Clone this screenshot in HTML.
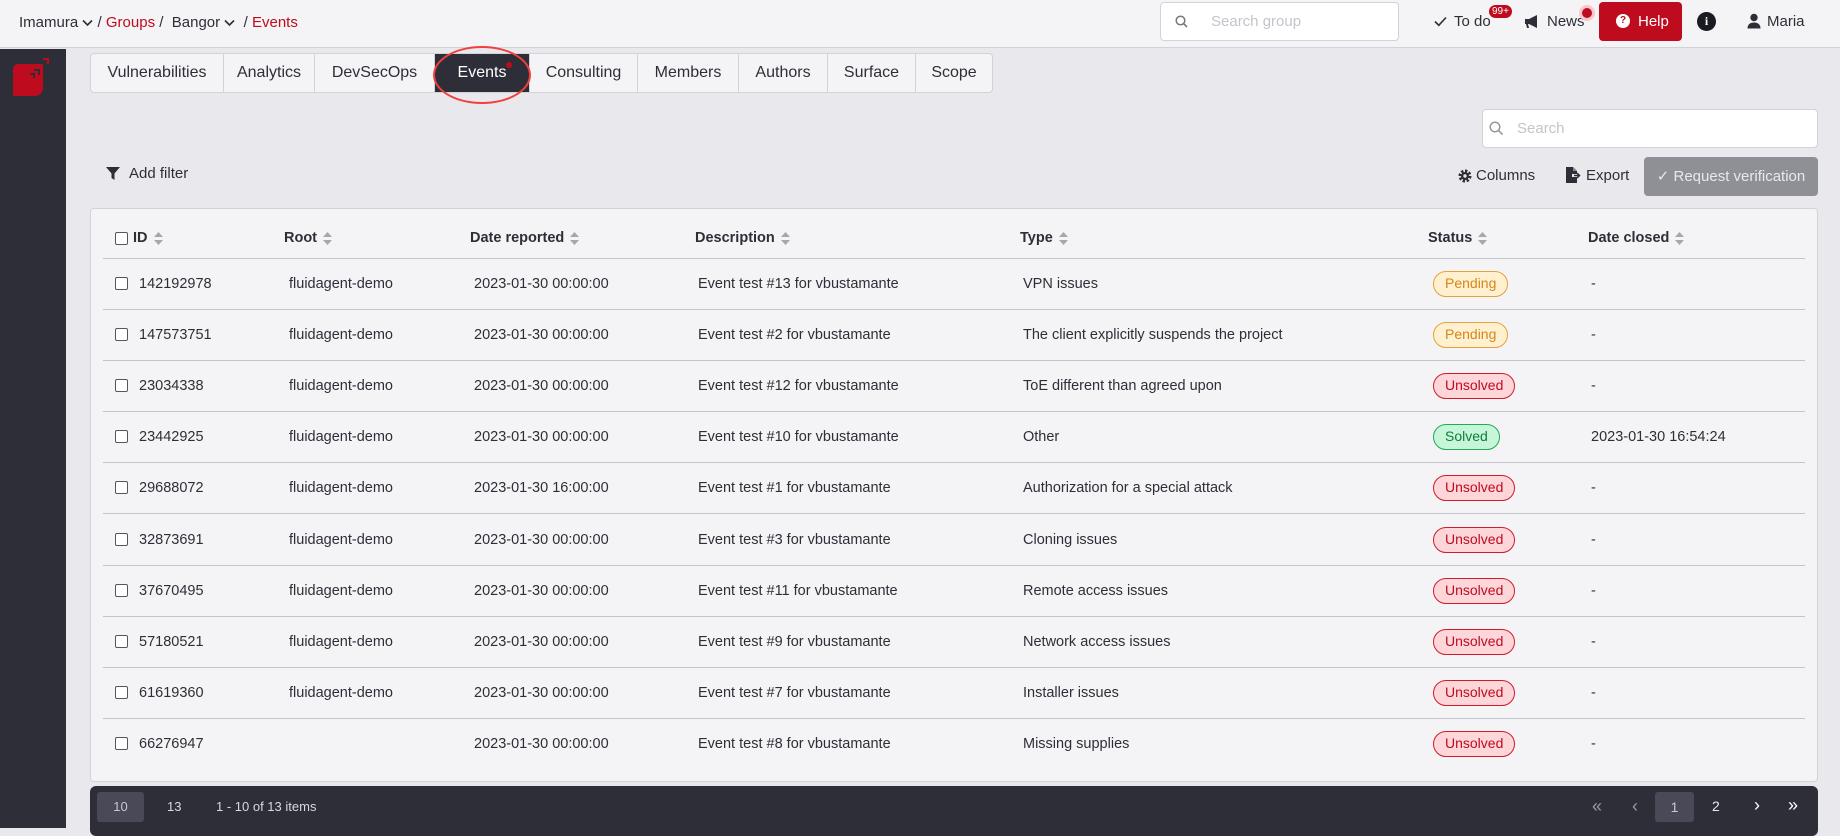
<!DOCTYPE html>
<html><head><meta charset="utf-8">
<style>
*{box-sizing:border-box;margin:0;padding:0}
body{width:1840px;height:828px;overflow:hidden;background:#e9e9ed;font-family:"Liberation Sans",Arial,sans-serif;color:#2e2e38;position:relative}
.a{position:absolute;white-space:nowrap}
.top{position:absolute;left:0;top:0;width:1840px;height:48px;background:#f4f4f6;border-bottom:1px solid #d2d2da}
.side{position:absolute;left:0;top:49px;width:66px;height:779px;background:#2e2e38}
.tabs{position:absolute;left:90px;top:53px;height:40px;display:flex;background:#f4f4f6;border:1px solid #d2d2da;border-radius:4px}
.tab{height:38px;line-height:38px;font-size:16px;color:#2e2e38;border-right:1px solid #d2d2da;text-align:center}
.tab.act{background:#2e2e38;color:#fff;position:relative}
.card{position:absolute;left:90px;top:208px;width:1728px;height:574px;background:#f4f4f6;border:1px solid #d2d2da;border-radius:4px}
.th{position:absolute;top:230px;font-size:14.5px;font-weight:bold;color:#2e2e38}
.cell{position:absolute;font-size:14.5px;color:#2e2e38}
.line{position:absolute;left:103px;width:1702px;height:1px;background:#c4c4cc}
.cb{position:absolute;width:13px;height:13px;border:1.5px solid #55555f;border-radius:2px;background:#fff}
.bd{position:absolute;height:26px;line-height:23px;border-radius:13px;font-size:14px;padding:0 11px;border:1.5px solid}
.pend{background:#fff0cf;border-color:#e5a23a;color:#d6861b}
.uns{background:#fdd6da;border-color:#d21a2a;color:#bf0b1e}
.sol{background:#c6f6d8;border-color:#24a855;color:#137a3b}
.sort{display:inline-block;vertical-align:middle;margin-left:6px}
</style></head><body>
<div class="top"></div>
<div class="a" style="left:19px;top:14px;font-size:15px">Imamura <svg width="11" height="8" viewBox="0 0 11 8"><path d="M1 1.5l4.5 4.5 4.5-4.5" fill="none" stroke="#2e2e38" stroke-width="1.6"/></svg> / <span style="color:#bf0b1e">Groups</span> / &nbsp;Bangor <svg width="11" height="8" viewBox="0 0 11 8"><path d="M1 1.5l4.5 4.5 4.5-4.5" fill="none" stroke="#2e2e38" stroke-width="1.6"/></svg> &nbsp;/ <span style="color:#bf0b1e">Events</span></div>
<div class="a" style="left:1160px;top:2px;width:239px;height:39px;background:#fff;border:1px solid #d2d2da;border-radius:4px"></div>
<svg class="a" style="left:1175px;top:15px" width="13" height="13" viewBox="0 0 13 13"><circle cx="5.5" cy="5.5" r="4.3" fill="none" stroke="#777" stroke-width="1.5"/><path d="M8.7 8.7l3.3 3.3" stroke="#777" stroke-width="1.6"/></svg>
<div class="a" style="left:1211px;top:13px;font-size:15px;color:#c4c4cc">Search group</div>
<svg class="a" style="left:1434px;top:16px" width="13" height="11" viewBox="0 0 13 11"><path d="M1 5.5l3.8 3.8L12 1.5" fill="none" stroke="#2e2e38" stroke-width="1.6"/></svg>
<div class="a" style="left:1454px;top:13px;font-size:15px">To do</div>
<div class="a" style="left:1489px;top:5px;height:13px;line-height:13px;padding:0 3px;background:#bf0b1e;color:#fff;border-radius:7px;font-size:10px">99+</div>
<svg class="a" style="left:1524px;top:14px" width="16" height="15" viewBox="0 0 16 15"><path d="M1 5h4l8-4v13l-8-4H4l1 4H3L2 10H1z" fill="#2e2e38"/></svg>
<div class="a" style="left:1547px;top:13px;font-size:15px">News</div>
<div class="a" style="left:1582px;top:8px;width:10px;height:10px;border-radius:50%;background:#bf0b1e;box-shadow:0 0 0 3px #f6c8cc"></div>
<div class="a" style="left:1599px;top:2px;width:83px;height:39px;background:#bf0b1e;border-radius:4px"></div>
<div class="a" style="left:1616px;top:14px;width:14px;height:14px;border-radius:50%;background:#fff;color:#bf0b1e;font-size:10px;font-weight:bold;text-align:center;line-height:14px">?</div>
<div class="a" style="left:1638px;top:13px;font-size:15px;color:#fff">Help</div>
<div class="a" style="left:1697px;top:12px;width:19px;height:19px;border-radius:50%;background:#1a1a22;color:#fff;font-size:12px;font-weight:bold;text-align:center;line-height:19px;font-family:'Liberation Serif',serif">i</div>
<svg class="a" style="left:1747px;top:13px" width="14" height="16" viewBox="0 0 14 16"><circle cx="7" cy="4.5" r="3.7" fill="#2e2e38"/><path d="M0.5 15.5c0-4 2.5-6 6.5-6s6.5 2 6.5 6z" fill="#2e2e38"/></svg>
<div class="a" style="left:1767px;top:13px;font-size:15px">Maria</div>

<div class="side"></div>
<svg class="a" style="left:10px;top:57px" width="42" height="42" viewBox="0 0 42 42"><path d="M8 7h23a2 2 0 0 1 2 2v22a8 8 0 0 1-8 8H5a2 2 0 0 1-2-2V12a5 5 0 0 1 5-5z" fill="#bf0b1e"/><path d="M33 2h5v5" fill="none" stroke="#bf0b1e" stroke-width="2"/><path d="M24 13h5v5M20 17h4v4" fill="none" stroke="#2e2e38" stroke-width="2"/></svg>

<div class="tabs">
<div class="tab" style="width:133px">Vulnerabilities</div>
<div class="tab" style="width:91px">Analytics</div>
<div class="tab" style="width:120px">DevSecOps</div>
<div class="tab act" style="width:95px">Events<span style="position:absolute;right:17px;top:8px;width:6px;height:6px;border-radius:50%;background:#bf0b1e"></span></div>
<div class="tab" style="width:108px">Consulting</div>
<div class="tab" style="width:101px">Members</div>
<div class="tab" style="width:89px">Authors</div>
<div class="tab" style="width:88px">Surface</div>
<div class="tab" style="width:76px;border-right:none">Scope</div>
</div>
<div class="a" style="left:433px;top:46px;width:98px;height:58px;border:2.5px solid #f0403f;border-radius:50%"></div>

<div class="a" style="left:1482px;top:109px;width:336px;height:39px;background:#fff;border:1px solid #d2d2da;border-radius:4px"></div>
<svg class="a" style="left:1489px;top:121px" width="15" height="15" viewBox="0 0 15 15"><circle cx="6" cy="6" r="4.8" fill="none" stroke="#999" stroke-width="1.5"/><path d="M9.6 9.6l4 4" stroke="#999" stroke-width="1.6"/></svg>
<div class="a" style="left:1517px;top:120px;font-size:15px;color:#c4c4cc">Search</div>

<svg class="a" style="left:106px;top:167px" width="14" height="13" viewBox="0 0 14 13"><path d="M0 0h14L8.5 6.5V13L5.5 11V6.5z" fill="#2e2e38"/></svg>
<div class="a" style="left:129px;top:165px;font-size:15px">Add filter</div>
<svg class="a" style="left:1458px;top:169px" width="14" height="14" viewBox="0 0 14 14"><circle cx="7" cy="7" r="5" fill="none" stroke="#2e2e38" stroke-width="3" stroke-dasharray="2.3 1.6"/><circle cx="7" cy="7" r="4" fill="#2e2e38"/><circle cx="7" cy="7" r="1.7" fill="#e9e9ed"/></svg>
<div class="a" style="left:1476px;top:167px;font-size:15px">Columns</div>
<svg class="a" style="left:1565px;top:167px" width="16" height="16" viewBox="0 0 16 16"><path d="M1 0h7l4 4v3H7v3h5v6H1z" fill="#2e2e38"/><path d="M8 0v4h4" fill="#888"/><path d="M9 8.5h5M12 6l2.5 2.5L12 11" fill="none" stroke="#2e2e38" stroke-width="1.5"/></svg>
<div class="a" style="left:1586px;top:167px;font-size:15px">Export</div>
<div class="a" style="left:1644px;top:157px;width:174px;height:39px;background:#8f8f96;border-radius:4px;color:#e8e8ec;font-size:15px;line-height:39px;text-align:center">&#10003; Request verification</div>

<div class="card"></div>
<div class="cb" style="left:115px;top:232px"></div>
<div class="th" style="left:133px">ID<svg class="sort" width="9" height="13" viewBox="0 0 9 13"><path d="M4.5 0L9 5H0zM4.5 13L0 8h9z" fill="#a6a6b0"/></svg></div>
<div class="th" style="left:284px">Root<svg class="sort" width="9" height="13" viewBox="0 0 9 13"><path d="M4.5 0L9 5H0zM4.5 13L0 8h9z" fill="#a6a6b0"/></svg></div>
<div class="th" style="left:470px">Date reported<svg class="sort" width="9" height="13" viewBox="0 0 9 13"><path d="M4.5 0L9 5H0zM4.5 13L0 8h9z" fill="#a6a6b0"/></svg></div>
<div class="th" style="left:695px">Description<svg class="sort" width="9" height="13" viewBox="0 0 9 13"><path d="M4.5 0L9 5H0zM4.5 13L0 8h9z" fill="#a6a6b0"/></svg></div>
<div class="th" style="left:1020px">Type<svg class="sort" width="9" height="13" viewBox="0 0 9 13"><path d="M4.5 0L9 5H0zM4.5 13L0 8h9z" fill="#a6a6b0"/></svg></div>
<div class="th" style="left:1428px">Status<svg class="sort" width="9" height="13" viewBox="0 0 9 13"><path d="M4.5 0L9 5H0zM4.5 13L0 8h9z" fill="#a6a6b0"/></svg></div>
<div class="th" style="left:1588px">Date closed<svg class="sort" width="9" height="13" viewBox="0 0 9 13"><path d="M4.5 0L9 5H0zM4.5 13L0 8h9z" fill="#a6a6b0"/></svg></div>
<div class="line" style="top:258px"></div>

<div id="rows"></div>

<div class="a" style="left:90px;top:786px;width:1728px;height:50px;background:#2e2e38;border-radius:6px"></div>
<div class="a" style="left:97px;top:792px;width:47px;height:30px;background:#494957;border-radius:3px;color:#c8c8d0;font-size:13px;text-align:center;line-height:30px">10</div>
<div class="a" style="left:167px;top:799px;font-size:13px;color:#d8d8e0">13</div>
<div class="a" style="left:216px;top:799px;font-size:13px;color:#d8d8e0">1 - 10 of 13 items</div>
<div class="a" style="left:1592px;top:796px;font-size:18px;color:#9a9aa5">&laquo;</div>
<div class="a" style="left:1632px;top:796px;font-size:18px;color:#9a9aa5">&lsaquo;</div>
<div class="a" style="left:1655px;top:792px;width:39px;height:30px;background:#494957;border-radius:3px;color:#c8c8d0;font-size:14px;text-align:center;line-height:30px">1</div>
<div class="a" style="left:1712px;top:798px;font-size:14px;color:#e8e8ee">2</div>
<div class="a" style="left:1754px;top:795px;font-size:18px;color:#fff">&rsaquo;</div>
<div class="a" style="left:1788px;top:795px;font-size:18px;color:#fff">&raquo;</div>

<script>
var d=[["142192978","fluidagent-demo","2023-01-30 00:00:00","Event test #13 for vbustamante","VPN issues","pend","Pending","-"],
["147573751","fluidagent-demo","2023-01-30 00:00:00","Event test #2 for vbustamante","The client explicitly suspends the project","pend","Pending","-"],
["23034338","fluidagent-demo","2023-01-30 00:00:00","Event test #12 for vbustamante","ToE different than agreed upon","uns","Unsolved","-"],
["23442925","fluidagent-demo","2023-01-30 00:00:00","Event test #10 for vbustamante","Other","sol","Solved","2023-01-30 16:54:24"],
["29688072","fluidagent-demo","2023-01-30 16:00:00","Event test #1 for vbustamante","Authorization for a special attack","uns","Unsolved","-"],
["32873691","fluidagent-demo","2023-01-30 00:00:00","Event test #3 for vbustamante","Cloning issues","uns","Unsolved","-"],
["37670495","fluidagent-demo","2023-01-30 00:00:00","Event test #11 for vbustamante","Remote access issues","uns","Unsolved","-"],
["57180521","fluidagent-demo","2023-01-30 00:00:00","Event test #9 for vbustamante","Network access issues","uns","Unsolved","-"],
["61619360","fluidagent-demo","2023-01-30 00:00:00","Event test #7 for vbustamante","Installer issues","uns","Unsolved","-"],
["66276947","","2023-01-30 00:00:00","Event test #8 for vbustamante","Missing supplies","uns","Unsolved","-"]];
var h="";
d.forEach(function(r,i){var c=284+i*51.1,t=c-8;
h+='<div class="cb" style="left:115px;top:'+(c-7)+'px"></div>';
h+='<div class="cell" style="left:139px;top:'+t+'px">'+r[0]+'</div>';
h+='<div class="cell" style="left:289px;top:'+t+'px">'+r[1]+'</div>';
h+='<div class="cell" style="left:474px;top:'+t+'px">'+r[2]+'</div>';
h+='<div class="cell" style="left:698px;top:'+t+'px">'+r[3]+'</div>';
h+='<div class="cell" style="left:1023px;top:'+t+'px">'+r[4]+'</div>';
h+='<div class="bd '+r[5]+'" style="left:1433px;top:'+(c-13)+'px">'+r[6]+'</div>';
h+='<div class="cell" style="left:1591px;top:'+t+'px">'+r[7]+'</div>';
if(i<9)h+='<div class="line" style="top:'+Math.round(c+25)+'px"></div>';});
document.getElementById("rows").innerHTML=h;
</script>
</body></html>
